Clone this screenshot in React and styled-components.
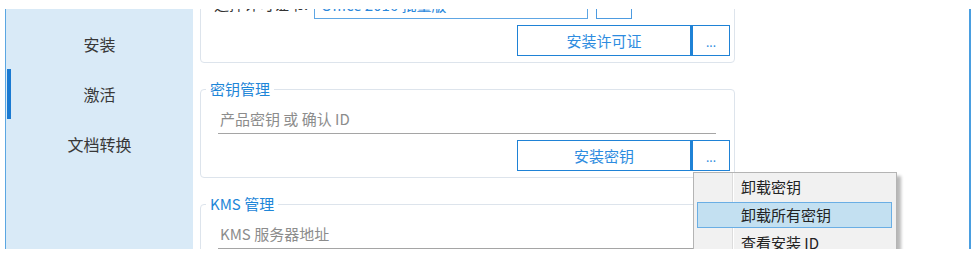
import React from 'react';
import styled, { createGlobalStyle } from 'styled-components';

const GlobalStyle = createGlobalStyle`
  html, body {
    margin: 0;
    padding: 0;
    background: #ffffff;
  }
  body {
    font-family: "Noto Sans CJK SC", "Noto Sans", sans-serif;
    color: #222;
  }
`;

const Window = styled.div`
  margin: 9px 0 0 5px;
  width: 966px;
  height: 240px;
  box-sizing: border-box;
  border-left: 1px solid #5aa6e2;
  border-right: 2px solid #4a9ee0;
  display: flex;
  overflow: hidden;
`;

const Sidebar = styled.nav`
  width: 187px;
  flex-shrink: 0;
  background: #d9eaf7;
  padding-top: 10px;
  display: flex;
  flex-direction: column;
`;

const NavItem = styled.div`
  position: relative;
  height: 50px;
  display: flex;
  align-items: center;
  justify-content: center;
  font-size: 16px;
  line-height: 20px;
  color: #383838;

  &::before {
    content: '';
    position: absolute;
    left: 1px;
    top: 0;
    width: 4px;
    height: 50px;
    background: ${p => (p.$active ? '#1a7ad2' : 'transparent')};
  }
`;

const Content = styled.main`
  flex: 1;
  overflow: hidden;
  padding-left: 7px;
`;

const Scroller = styled.div`
  margin-top: -44px;
  display: flex;
  flex-direction: column;
  gap: 17px;
`;

const Group = styled.fieldset`
  width: 535px;
  box-sizing: border-box;
  margin: 0;
  padding: 0;
  border: 1px solid #dde4ec;
  border-radius: 4px;
  min-inline-size: 0;
`;

const Legend = styled.legend`
  margin-left: 5px;
  padding: 0 4px;
  font-size: 15px;
  line-height: 18px;
  color: #1e86d8;
`;

const GroupBody = styled.div`
  padding: 6px 4px 6px 17px;
  display: flex;
  flex-direction: column;
  gap: 6px;
`;

const FileRow = styled.div`
  height: 30px;
  display: flex;
  align-items: center;
`;

const Label = styled.span`
  width: 100px;
  font-size: 15px;
  line-height: 18px;
  color: #333;
  margin-left: -4px;
`;

const PathBox = styled.div`
  width: 274px;
  height: 30px;
  box-sizing: border-box;
  border: 1px solid #5ea6e4;
  padding: 0 6px;
  display: flex;
  align-items: center;
  font-size: 15px;
  color: #2a88dc;
`;

const Browse = styled.div`
  width: 36px;
  height: 30px;
  box-sizing: border-box;
  border: 1px solid #4d9be0;
  margin-left: 8px;
`;

const TextInput = styled.div`
  height: 30px;
  margin-right: 14px;
  box-sizing: border-box;
  border-bottom: 1px solid #a5a5a5;
  padding-left: 2px;
  display: flex;
  align-items: center;
  font-size: 15px;
  line-height: 18px;
  color: #8c8c8c;
`;

const ButtonRow = styled.div`
  display: flex;
  justify-content: flex-end;
`;

const SplitButton = styled.div`
  position: relative;
  display: flex;
`;

const Button = styled.div`
  width: ${p => p.$width}px;
  height: 31px;
  box-sizing: border-box;
  border: 1px solid #1f82d6;
  border-left-width: ${p => (p.$joined ? 2 : 1)}px;
  background: #ffffff;
  display: flex;
  align-items: center;
  justify-content: center;
  font-size: ${p => (p.$small ? 12 : 15)}px;
  line-height: 18px;
  padding-top: ${p => (p.$small ? 3 : 0)}px;
  color: #2d8ce0;
`;

const Menu = styled.div`
  position: absolute;
  left: 2px;
  top: 32px;
  width: 204px;
  box-sizing: border-box;
  background: #f1f1f1;
  border: 1px solid #b4b4b4;
  box-shadow: 4px 4px 3px rgba(0, 0, 0, 0.28);
  padding: 1px 0;
  display: flex;
  flex-direction: column;
  gap: 2px;
  z-index: 5;

  &::before {
    content: '';
    position: absolute;
    left: 38px;
    top: 0;
    bottom: 0;
    width: 1px;
    background: #dcdcdc;
    border-right: 1px solid #ffffff;
  }
`;

const MenuItem = styled.div`
  position: relative;
  height: 26px;
  margin: 0 4px 0 3px;
  box-sizing: border-box;
  border: 1px solid ${p => (p.$hover ? '#6aaee4' : 'transparent')};
  background: ${p => (p.$hover ? '#c3e0f1' : 'transparent')};
  padding-left: 43px;
  display: flex;
  align-items: center;
  font-size: 15px;
  line-height: 18px;
  color: #222;
  z-index: 1;
`;

const navItems = ['安装', '激活', '文档转换'];
const keyMenu = ['卸载密钥', '卸载所有密钥', '查看安装 ID'];

export default function App() {
  return (
    <>
      <GlobalStyle />
      <Window>
        <Sidebar>
          {navItems.map(item => (
            <NavItem key={item} $active={item === '激活'}>
              {item}
            </NavItem>
          ))}
        </Sidebar>
        <Content>
          <Scroller>
            <Group>
              <Legend>许可证管理</Legend>
              <GroupBody>
                <FileRow>
                  <Label>选择许可证书:</Label>
                  <PathBox>Office 2016 批量版</PathBox>
                  <Browse />
                </FileRow>
                <ButtonRow>
                  <Button $width={174}>安装许可证</Button>
                  <Button $width={39} $joined $small>...</Button>
                </ButtonRow>
              </GroupBody>
            </Group>

            <Group>
              <Legend>密钥管理</Legend>
              <GroupBody>
                <TextInput>产品密钥 或 确认 ID</TextInput>
                <ButtonRow>
                  <Button $width={174}>安装密钥</Button>
                  <SplitButton>
                    <Button $width={39} $joined $small>...</Button>
                    <Menu>
                      {keyMenu.map((m, i) => (
                        <MenuItem key={m} $hover={i === 1}>{m}</MenuItem>
                      ))}
                    </Menu>
                  </SplitButton>
                </ButtonRow>
              </GroupBody>
            </Group>

            <Group>
              <Legend>KMS 管理</Legend>
              <GroupBody>
                <TextInput>KMS 服务器地址</TextInput>
              </GroupBody>
            </Group>
          </Scroller>
        </Content>
      </Window>
    </>
  );
}
